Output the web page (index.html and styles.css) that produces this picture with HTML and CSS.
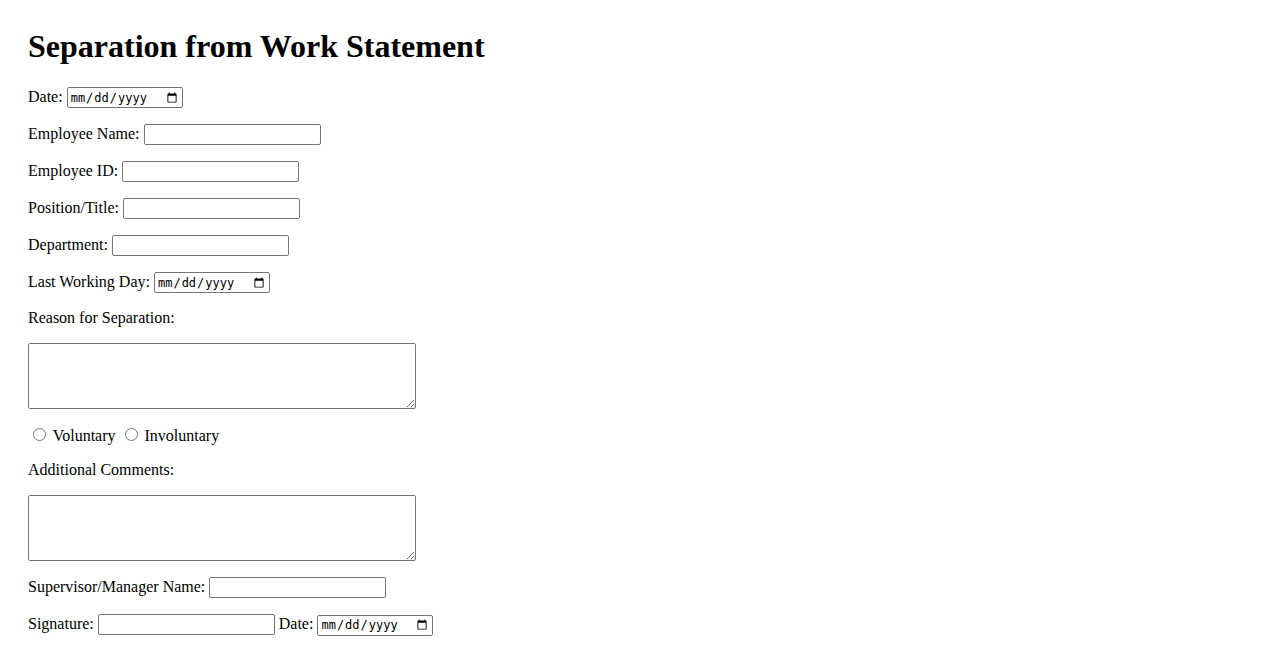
FILE: index.html
```
<!DOCTYPE html>
<html>
<head>
<meta charset="utf-8">
<title>Separation from Work Statement</title>
<link rel="stylesheet" href="styles.css">
</head>
<body>
<h1 class="title">Separation from Work Statement</h1>
<form class="form">
  <p class="row"><label for="date">Date:</label> <input class="date" type="date" id="date"></p>
  <p class="row"><label for="name">Employee Name:</label> <input class="text" type="text" id="name"></p>
  <p class="row"><label for="eid">Employee ID:</label> <input class="text" type="text" id="eid"></p>
  <p class="row"><label for="pos">Position/Title:</label> <input class="text" type="text" id="pos"></p>
  <p class="row"><label for="dept">Department:</label> <input class="text" type="text" id="dept"></p>
  <p class="row"><label for="lwd">Last Working Day:</label> <input class="date" type="date" id="lwd"></p>
  <p class="row"><label for="reason">Reason for Separation:</label></p>
  <p class="row"><textarea class="area" id="reason"></textarea></p>
  <p class="row"><input class="radio" type="radio" name="type" id="vol"> <label for="vol">Voluntary</label> <input class="radio" type="radio" name="type" id="invol"> <label for="invol">Involuntary</label></p>
  <p class="row"><label for="comments">Additional Comments:</label></p>
  <p class="row"><textarea class="area" id="comments"></textarea></p>
  <p class="row"><label for="sup">Supervisor/Manager Name:</label> <input class="text" type="text" id="sup"></p>
  <p class="row"><label for="sig">Signature:</label> <input class="text" type="text" id="sig"> <label for="sigdate">Date:</label> <input class="date" type="date" id="sigdate"></p>
</form>
</body>
</html>
```
FILE: styles.css
```
html, body {
  background: #ffffff;
}
body {
  margin: 0;
  padding: 28px;
  font-family: "Liberation Serif", "Times New Roman", serif;
  font-size: 16px;
  color: #000000;
}
.title {
  margin: 0 0 22px;
  font-size: 32px;
  font-weight: bold;
  line-height: 37px;
}
.form {
  margin: 0;
}
.row {
  margin: 16px 0;
}
.form .row:first-child {
  margin-top: 0;
}
.text, .date {
  box-sizing: border-box;
  height: 21px;
  border: 1px solid #767676;
  border-radius: 2px;
  padding: 1px 2px;
  font-size: 13.33px;
  background: #ffffff;
}
.text {
  width: 177px;
}
.date {
  width: 116px;
  font-family: "DejaVu Sans Mono", "Liberation Mono", monospace;
  font-size: 12px;
}
.area {
  box-sizing: border-box;
  width: 388px;
  height: 66px;
  border: 1px solid #767676;
  border-radius: 2px;
  padding: 2px;
  font-family: "Liberation Mono", monospace;
  font-size: 13.33px;
  vertical-align: top;
}
.radio {
  margin: 3px 3px 0 5px;
}
```
